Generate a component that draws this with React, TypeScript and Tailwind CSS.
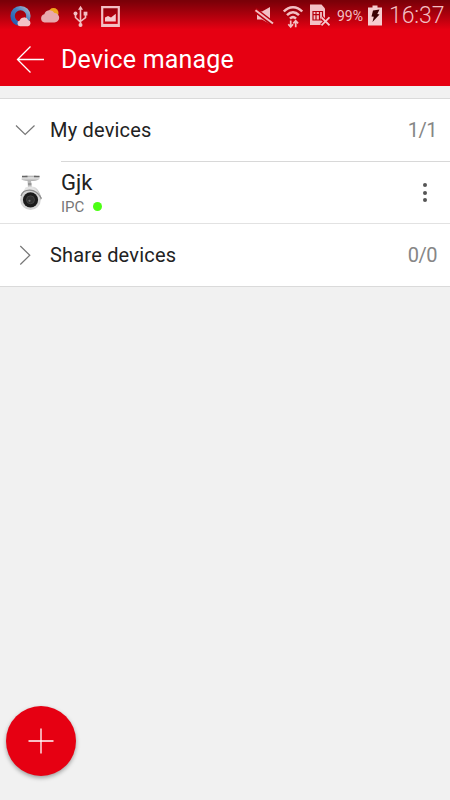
import React from 'react';

function BrowserIcon() {
  return (
    <svg className="ml-[10px] shrink-0" width="22" height="24" viewBox="0 0 22 24">
      <defs>
        <linearGradient id="ring" x1="0" y1="1" x2="1" y2="0">
          <stop offset="0" stopColor="#2458ae" />
          <stop offset="0.55" stopColor="#3f7fc0" />
          <stop offset="1" stopColor="#a5b5cc" />
        </linearGradient>
      </defs>
      <circle cx="10.5" cy="12" r="7.9" fill="none" stroke="url(#ring)" strokeWidth="4.4" />
      <path d="M10 22.200a2.900 2.900 0 0 1-.3-5.700 4.600 4.600 0 0 1 8.600-.3 3.100 3.100 0 0 1-.2 6z" fill="#f3c1c6" />
    </svg>
  );
}

function WeatherIcon() {
  return (
    <svg className="ml-[8px] shrink-0" width="22" height="24" viewBox="0 0 22 24">
      <circle cx="13.500" cy="9" r="5" fill="#efa51e" />
      <path d="M4.500 18.500a4.200 4.200 0 0 1-.2-8.200 5.500 5.500 0 0 1 10.200-1.200 4.700 4.700 0 0 1 0 9.400z" fill="#e8a9ae" />
    </svg>
  );
}

function UsbIcon() {
  return (
    <svg className="ml-[10px] shrink-0" width="16" height="24" viewBox="0 0 16 24" fill="none" stroke="#f3bfc3" strokeWidth="1.6">
      <path d="M8.500 4v18M3.500 9v4.500l5 4.600M13.500 9v4.500l-5 4" />
      <path d="M8.500 1.800 11 5.700H6z" fill="#f3bfc3" stroke="none" />
      <circle cx="3.500" cy="9.500" r="2" fill="#f3bfc3" stroke="none" />
      <rect x="11.600" y="7.700" width="3.800" height="3.800" fill="#f3bfc3" stroke="none" />
      <circle cx="8.500" cy="21" r="2" fill="#f3bfc3" stroke="none" />
    </svg>
  );
}

function GalleryIcon() {
  return (
    <svg className="ml-[12px] shrink-0" width="20" height="24" viewBox="0 0 20 24">
      <path d="M2.200 3.100h16.600v18.800H2.200z" fill="none" stroke="#f3bfc3" strokeWidth="2.200" />
      <path d="M5 17.500v-4l3-1.500 3 1.500 4.800-3.800v7.800z" fill="#f6c9cd" />
      <path d="M2 21h17" stroke="#f3bfc3" strokeWidth="2.200" />
    </svg>
  );
}

function MuteIcon() {
  return (
    <svg className="shrink-0" width="20" height="24" viewBox="0 0 20 24">
      <path d="M3 7.500h5l8-4.500v17l-8-4.500H3z" fill="#f3bfc3" />
      <path d="M1 6 18 19" stroke="#b8000e" strokeWidth="4.800" />
      <path d="M1.500 6.300 19 19.500" stroke="#f3bfc3" strokeWidth="2" />
    </svg>
  );
}

function WifiIcon() {
  return (
    <svg className="ml-[8px] shrink-0" width="22" height="26" viewBox="0 0 22 26" fill="none" stroke="#f3bfc3">
      <path d="M1.800 8.500C7 2.700 15 2.700 20.200 8.500M5 12.100c3.800-3.800 8.200-3.800 12 0M8 15.600c2-1.900 4-1.900 6 0" strokeWidth="2.500" />
      <path d="M8.700 17.500v6.500M6.300 21.300l2.400 2.700 2.400-2.700M13.700 24.300v-6.300M11.300 20.300l2.400-2.600 2.400 2.600" strokeWidth="1.700" />
    </svg>
  );
}

function SimIcon() {
  return (
    <svg className="ml-[6px] shrink-0" width="20" height="26" viewBox="0 0 20 26">
      <path d="M0 1.500h11.500L15 5.500v10l-4 6.500H0z" fill="#f3c1c6" />
      <path d="M3 8.500h9.500v8.500H3zM6 8.500V17M9.500 8.500V17M3 11.700h6.500" fill="none" stroke="#b5000d" strokeWidth="1.200" />
      <path d="m11.500 14.500 8 8m0-8-8 8" stroke="#cd0010" strokeWidth="4" />
      <path d="m11.500 14.300 8 8m0-8-8 8" stroke="#f6c9cd" strokeWidth="1.800" />
    </svg>
  );
}

function BatteryIcon() {
  return (
    <svg className="ml-[4px] shrink-0" width="15" height="24" viewBox="0 0 15 24">
      <path d="M4.500 1.500h5v2H14v18H0v-18h4.500z" fill="#f6cdd0" />
      <path d="M5 6.500 11.500 5.500 9.300 10l2.200.4L4.500 18l1.300-5.300L3.500 12.500z" fill="#3a0003" />
    </svg>
  );
}

function CameraIcon() {
  return (
    <svg className="ml-[18px] shrink-0" width="26" height="38" viewBox="0 0 26 38">
      <defs>
        <linearGradient id="body" x1="0" y1="0" x2="1" y2="1">
          <stop offset="0" stopColor="#f7f7f7" />
          <stop offset="0.55" stopColor="#cbcbcb" />
          <stop offset="1" stopColor="#777" />
        </linearGradient>
        <linearGradient id="mount" x1="0" y1="0" x2="0" y2="1">
          <stop offset="0" stopColor="#9c9c9c" />
          <stop offset="0.4" stopColor="#e6e6e6" />
          <stop offset="1" stopColor="#aaa" />
        </linearGradient>
      </defs>
      <path d="M4 2.300C4 1.500 21.500 1.500 21.500 2.300V5c-2 1.700-5.500 2-8.800 2S5 6.500 3.500 5.500z" fill="url(#mount)" />
      <path d="M4 2.500h5.500M16 2.500h5.500" stroke="#666" strokeWidth="1.300" />
      <path d="M9.500 6.500h3.500l1 8h-4z" fill="#b7b7b7" />
      <path d="M10 10h3.500" stroke="#777" strokeWidth="1" />
      <path d="M7.500 13.500c2.500-1.200 7.500-1.400 10 0 2.500 1.500 5 6.500 6 11.500L22 26z" fill="url(#body)" />
      <path d="M7.500 13.500C13 11.500 19 14.500 22 21L3 22z" fill="#e4e4e4" />
      <circle cx="12.500" cy="25.800" r="10.300" fill="#d4d4d4" />
      <path d="M3 22c2-7 14-9.500 20.500 2.500" fill="none" stroke="#8d8d8d" strokeWidth="1.300" />
      <circle cx="12.500" cy="25.800" r="7.600" fill="#1b1b1b" />
      <circle cx="12.500" cy="25.800" r="4" fill="#303030" stroke="#4d4d4d" strokeWidth="0.700" />
      <circle cx="11.500" cy="26.800" r="1.100" fill="#707070" />
    </svg>
  );
}

function StatusBar() {
  return (
    <div className="flex h-[31px] items-center bg-linear-to-b from-[#7a0008] from-3% to-[#e60012] to-95% text-[#f3bfc3]">
      <BrowserIcon />
      <WeatherIcon />
      <UsbIcon />
      <GalleryIcon />
      <div className="ml-auto flex items-center pr-[6px]">
        <MuteIcon />
        <WifiIcon />
        <SimIcon />
        <span className="mt-[2px] ml-[7px] w-[27px] text-[14px] whitespace-nowrap">99%</span>
        <BatteryIcon />
        <span className="mt-px ml-[6px] w-[55px] text-[23px] font-light tracking-[-0.1px] whitespace-nowrap">16:37</span>
      </div>
    </div>
  );
}

type GroupRowProps = {
  title: string;
  count: string;
  open?: boolean;
};

function GroupRow({ title, count, open }: GroupRowProps) {
  return (
    <div className="flex h-[62px] items-center pr-[13px]">
      <svg className="ml-[15px] shrink-0" width="20" height="20" viewBox="0 0 20 20" fill="none" stroke="#777" strokeWidth="1.2">
        <path d={open ? 'M1 5.500 10.200 14.500 19.500 5.500' : 'M5.300 1 14.800 10.200 5.300 19.500'} />
      </svg>
      <span className="ml-[15px] text-[20px] tracking-[0.2px] text-[#222]">{title}</span>
      <span className="ml-auto text-[20px] tracking-[-0.5px] text-[#868686]">{count}</span>
    </div>
  );
}

export default function App() {
  return (
    <div className="flex h-[800px] w-[450px] flex-col overflow-hidden bg-[#f1f1f1] font-['Roboto','Liberation_Sans',sans-serif]">
      <header className="h-[86px] shrink-0 bg-[#e60012] text-white">
        <StatusBar />
        <div className="flex h-[55px] items-center">
          <svg className="ml-[16px] shrink-0" width="28" height="28" viewBox="0 0 28 28" fill="none" stroke="#fff" strokeWidth="1.3">
            <path d="M28 14.500H1.500M14.500 1.500l-13 13 13 13" />
          </svg>
          <h1 className="mt-[2px] ml-[17px] text-[25px] tracking-[0.2px]">Device manage</h1>
        </div>
      </header>

      <main className="mt-[12px] border-y border-[#dadada] bg-white">
        <GroupRow title="My devices" count="1/1" open />
        <div className="ml-[61px] h-px bg-[#d8d8d8]" />
        <div className="flex h-[61px] items-center">
          <CameraIcon />
          <div className="ml-[17px] pt-px">
            <div className="text-[22px] leading-[26px] text-[#222]">Gjk</div>
            <div className="flex items-center pt-px text-[15px] leading-[20px] text-[#777]">
              IPC
              <span className="ml-[9px] size-[9px] rounded-full bg-[#4cff14]" />
            </div>
          </div>
          <button className="mr-[23px] ml-auto flex flex-col gap-[3.5px]">
            <span className="size-[4px] rounded-full bg-[#555]" />
            <span className="size-[4px] rounded-full bg-[#555]" />
            <span className="size-[4px] rounded-full bg-[#555]" />
          </button>
        </div>
        <div className="h-px bg-[#e2e2e2]" />
        <GroupRow title="Share devices" count="0/0" />
      </main>

      <button className="mt-auto mb-[24px] ml-[6px] flex size-[70px] items-center justify-center rounded-full bg-[#e60012] shadow-[0_2px_4px_rgba(0,0,0,0.35)]">
        <svg width="26" height="26" viewBox="0 0 26 26" stroke="#fff" strokeWidth="1.3">
          <path d="M0.500 13h25M13 0.500v25" />
        </svg>
      </button>
    </div>
  );
}
